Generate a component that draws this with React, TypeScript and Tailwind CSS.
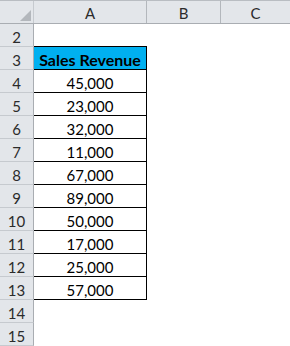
import React from "react";

const values = ["45,000", "23,000", "32,000", "11,000", "67,000", "89,000", "50,000", "17,000", "25,000", "57,000"];

const font = { fontFamily: "Lato, 'Open Sans', sans-serif" };

function RowHeader({ n }: { n: number }) {
  return (
    <div className="w-[34px] h-full shrink-0 bg-[#e3e6ea] border-r border-b border-r-[#a9adb2] border-b-[#c6cacf] flex items-end justify-center text-[15px] leading-[17px] text-[#2b2b2b]">
      {n}
    </div>
  );
}

export default function App() {
  const rows: React.ReactNode[] = [];
  rows.push(
    <div key={2} className="flex h-[23px]">
      <RowHeader n={2} />
      <div className="w-[113px] h-full border-b border-black" />
      <div className="flex-1" />
    </div>
  );
  rows.push(
    <div key={3} className="flex h-[23px]">
      <RowHeader n={3} />
      <div className="w-[113px] h-full border-r border-b border-black bg-[#00b0f0] flex items-end justify-center text-[16px] leading-[18px] font-bold text-black">
        Sales Revenue
      </div>
      <div className="flex-1" />
    </div>
  );
  values.forEach((v, i) => {
    rows.push(
      <div key={4 + i} className="flex h-[23px]">
        <RowHeader n={4 + i} />
        <div className="w-[113px] h-full border-r border-b border-black flex items-end justify-center text-[15px] leading-[17px] text-black">
          {v}
        </div>
        <div className="flex-1" />
      </div>
    );
  });
  [14, 15].forEach((n) => {
    rows.push(
      <div key={n} className="flex h-[23px]">
        <RowHeader n={n} />
        <div className="flex-1" />
      </div>
    );
  });

  return (
    <div className="w-[290px] h-[346px] bg-white overflow-hidden" style={font}>
      <div className="flex h-[24px] bg-[#e3e6ea] border-t border-t-[#b9bdc2] border-b border-b-[#a9adb2] text-[15px] leading-[17px] text-[#2b2b2b]">
        <div className="w-[34px] h-full shrink-0 border-r border-[#c6cacf] relative">
          <svg width="34" height="23" className="absolute left-0 top-0">
            <polygon points="20,20 31,20 31,9" fill="#b3b7bc" />
          </svg>
        </div>
        <div className="w-[113px] h-full border-r border-[#b3b7bc] flex items-end justify-center pb-[1px]">A</div>
        <div className="w-[74px] h-full border-r border-[#b3b7bc] flex items-end justify-center pb-[1px]">B</div>
        <div className="flex-1 h-full flex items-end justify-center pb-[1px]">C</div>
      </div>
      {rows}
    </div>
  );
}
